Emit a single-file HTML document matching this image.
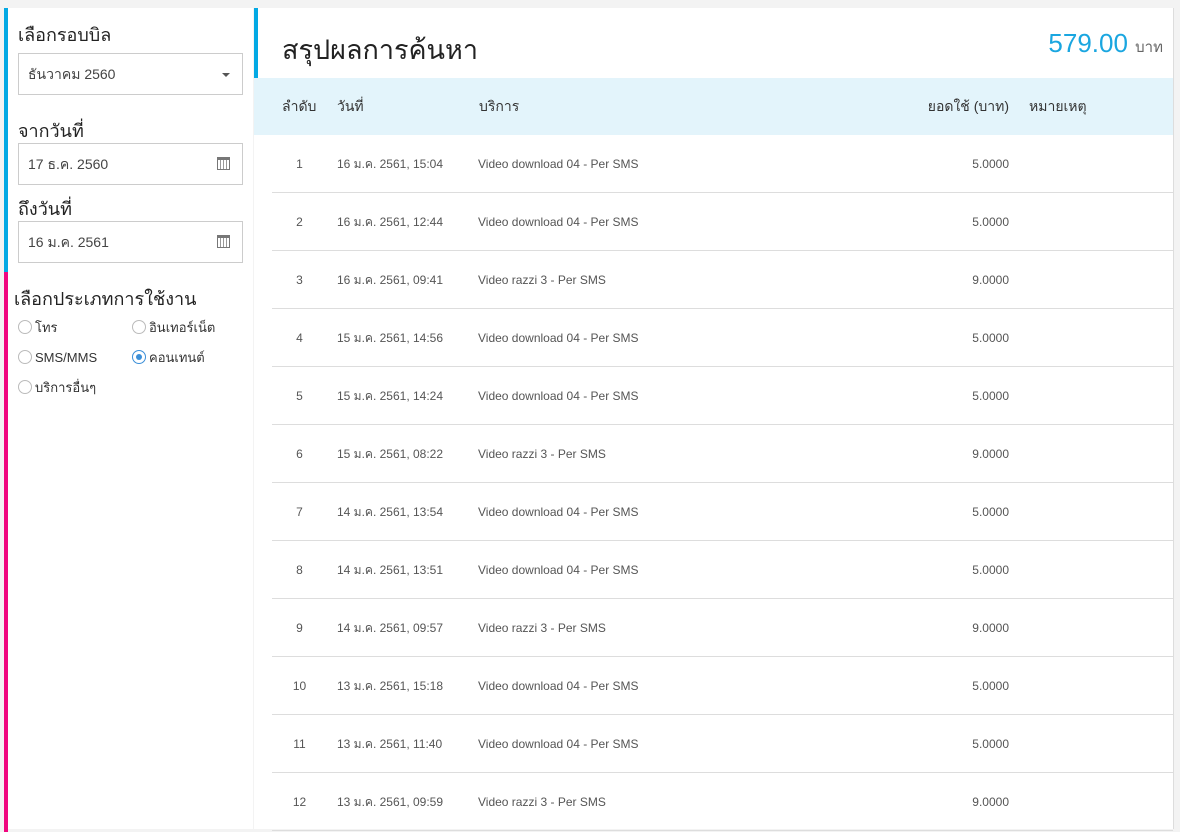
<!DOCTYPE html>
<html><head><meta charset="utf-8"><style>
*{box-sizing:border-box;margin:0;padding:0}
body{width:1180px;height:829px;overflow:hidden;background:#f3f3f3;font-family:"Liberation Sans",sans-serif;color:#333;position:relative}
.left{position:absolute;left:4px;top:8px;width:249px;height:821px;background:#fff}
.bb{position:absolute;left:0;top:0;width:4px;height:264px;background:#03a9e4}
.pb{position:absolute;left:0;top:264px;width:4px;height:560px;background:#f0077f}
.lbl{position:absolute;left:14px;font-size:18px;color:#222}
.inp{position:absolute;left:14px;width:225px;height:42px;border:1px solid #ccc;font-size:14px;padding:0 9px;line-height:40px;color:#444}
.cal{position:absolute;right:12px;top:13px;width:13px;height:13px;border:1px solid #777;border-top:3px solid #777;background:repeating-linear-gradient(90deg,#fff 0 2px,#999 2px 3px)}
.car{position:absolute;right:12px;top:19px;border:4px solid transparent;border-top:4px solid #555}
.rad{position:absolute;font-size:13px;color:#333;display:flex;align-items:center;height:16px}
.rad i{display:inline-block;width:14px;height:14px;border:1px solid #bbb;border-radius:50%;margin-right:3px;position:relative}
.rad i.on{border-color:#3b8fd8}
.rad i.on:after{content:"";position:absolute;left:3px;top:3px;width:6px;height:6px;border-radius:50%;background:#3b8fd8}
.main{position:absolute;left:254px;top:8px;width:920px;height:821px;background:#fff;border-right:1px solid #ddd}
.mb{position:absolute;left:0;top:0;width:4px;height:70px;background:#03a9e4}
.title{position:absolute;left:28px;top:20px;font-size:27px;color:#222}
.tot{position:absolute;right:10px;top:20px;font-size:26px;color:#1aa6e0}
.tot span{font-size:15px;color:#666}
.head{position:absolute;left:0;top:70px;width:919px;height:57px;background:#e3f4fb;font-size:14px;color:#333}
.head div,.row div{position:absolute;top:0}
.row{position:absolute;left:18px;width:901px;height:58px;border-bottom:1px solid #ddd;font-size:12px;color:#555;line-height:58px}
</style></head><body>
<div class="left">
<div class="bb"></div><div class="pb"></div>
<div class="lbl" style="top:12px">เลือกรอบบิล</div>
<div class="inp" style="top:45px">ธันวาคม 2560<span class="car"></span></div>
<div class="lbl" style="top:108px">จากวันที่</div>
<div class="inp" style="top:135px">17 ธ.ค. 2560<span class="cal"></span></div>
<div class="lbl" style="top:186px">ถึงวันที่</div>
<div class="inp" style="top:213px">16 ม.ค. 2561<span class="cal"></span></div>
<div class="lbl" style="top:276px;left:10px">เลือกประเภทการใช้งาน</div>
<div class="rad" style="left:14px;top:311px"><i></i>โทร</div>
<div class="rad" style="left:128px;top:311px"><i></i>อินเทอร์เน็ต</div>
<div class="rad" style="left:14px;top:341px"><i></i>SMS/MMS</div>
<div class="rad" style="left:128px;top:341px"><i class="on"></i>คอนเทนต์</div>
<div class="rad" style="left:14px;top:371px"><i></i>บริการอื่นๆ</div>
</div>
<div class="main">
<div class="mb"></div>
<div class="title">สรุปผลการค้นหา</div>
<div class="tot">579.00 <span>บาท</span></div>
<div class="head" style="line-height:57px">
<div style="left:28px">ลำดับ</div><div style="left:83px">วันที่</div><div style="left:225px">บริการ</div><div style="left:640px;width:115px;text-align:right">ยอดใช้ (บาท)</div><div style="left:775px">หมายเหตุ</div>
</div>
<div id="rows"></div>
</div>
<script>
var d=[["16 ม.ค. 2561, 15:04","Video download 04 - Per SMS","5.0000"],["16 ม.ค. 2561, 12:44","Video download 04 - Per SMS","5.0000"],["16 ม.ค. 2561, 09:41","Video razzi 3 - Per SMS","9.0000"],["15 ม.ค. 2561, 14:56","Video download 04 - Per SMS","5.0000"],["15 ม.ค. 2561, 14:24","Video download 04 - Per SMS","5.0000"],["15 ม.ค. 2561, 08:22","Video razzi 3 - Per SMS","9.0000"],["14 ม.ค. 2561, 13:54","Video download 04 - Per SMS","5.0000"],["14 ม.ค. 2561, 13:51","Video download 04 - Per SMS","5.0000"],["14 ม.ค. 2561, 09:57","Video razzi 3 - Per SMS","9.0000"],["13 ม.ค. 2561, 15:18","Video download 04 - Per SMS","5.0000"],["13 ม.ค. 2561, 11:40","Video download 04 - Per SMS","5.0000"],["13 ม.ค. 2561, 09:59","Video razzi 3 - Per SMS","9.0000"]];
var h="";d.forEach(function(r,i){h+='<div class="row" style="top:'+(127+i*58)+'px"><div style="left:0;width:55px;text-align:center">'+(i+1)+'</div><div style="left:65px">'+r[0]+'</div><div style="left:206px">'+r[1]+'</div><div style="left:600px;width:137px;text-align:right">'+r[2]+'</div></div>';});
document.getElementById("rows").innerHTML=h;
</script>
</body></html>
